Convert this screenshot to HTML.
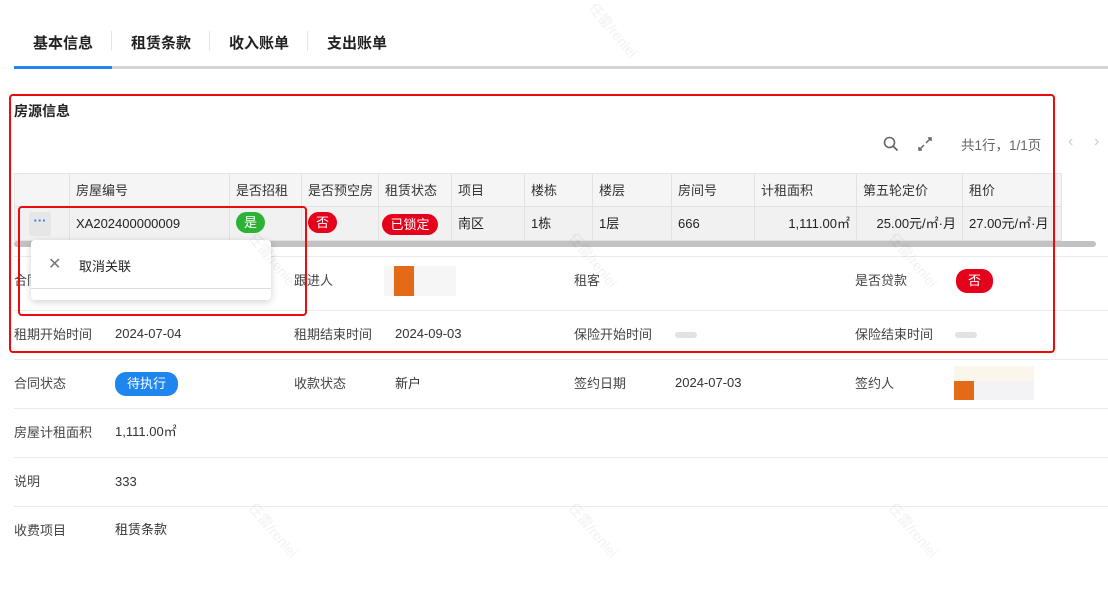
<!DOCTYPE html>
<html><head><meta charset="utf-8"><style>
*{margin:0;padding:0;box-sizing:border-box}
body{width:1108px;height:601px;background:#fff;font-family:"Liberation Sans","Noto Sans CJK SC",sans-serif;font-size:13px;color:#333;position:relative;overflow:hidden}
.a{position:absolute;white-space:nowrap}
.tab{font-size:15px;font-weight:bold;color:#222;top:32px}
.sep{position:absolute;top:31px;width:1px;height:20px;background:#e6e6e6}
.th,.td{position:absolute;height:34px;line-height:34px;padding-left:6px;border-right:1px solid #e2e2e2;font-size:13px}
.th{top:173px;background:#f5f5f5;color:#333;border-top:1px solid #e6e6e6;border-bottom:1px solid #e2e2e2}
.td{top:207px;background:#f1f1f1;color:#222;border-bottom:1px solid #e2e2e2}
.b{position:absolute;color:#fff;border-radius:11px;text-align:center;font-size:13px;line-height:21px;height:21px}
.hl{position:absolute;left:14px;width:1094px;height:1px;background:#ebebeb}
.lb{position:absolute;color:#444;font-size:13px;line-height:18px;white-space:nowrap}
.v{position:absolute;color:#333;font-size:13px;line-height:18px;white-space:nowrap}
.wm{position:absolute;color:rgba(0,0,0,0.06);font-size:14px;transform:rotate(50deg)}
</style></head><body>
<div class="a tab" style="left:33px">基本信息</div>
<div class="sep" style="left:111px"></div>
<div class="a tab" style="left:131px">租赁条款</div>
<div class="sep" style="left:209px"></div>
<div class="a tab" style="left:229px">收入账单</div>
<div class="sep" style="left:307px"></div>
<div class="a tab" style="left:327px">支出账单</div>
<div class="a" style="left:14px;top:66px;width:1094px;height:3px;background:#d4d4d4"></div>
<div class="a" style="left:14px;top:66px;width:98px;height:3px;background:#1f86f0"></div>

<div class="a" style="left:14px;top:101px;font-size:14px;font-weight:bold;color:#222">房源信息</div>
<svg class="a" style="left:882px;top:135px" width="18" height="18" viewBox="0 0 18 18"><circle cx="7.5" cy="7.5" r="5" fill="none" stroke="#666" stroke-width="1.6"/><path d="M11 11l4.5 4.5" stroke="#666" stroke-width="1.8"/></svg>
<svg class="a" style="left:916px;top:135px" width="18" height="18" viewBox="0 0 18 18"><path d="M10 8l5-5M12 3h3v3M8 10l-5 5M3 12v3h3" stroke="#666" stroke-width="1.5" fill="none"/></svg>
<div class="a" style="left:961px;top:134px;color:#666;font-size:13.5px">共1行，1/1页</div>
<div class="a" style="left:1068px;top:133px;color:#ccc;font-size:16px">‹</div>
<div class="a" style="left:1094px;top:133px;color:#ccc;font-size:16px">›</div>

<div class="th" style="left:14px;width:56px;border-left:1px solid #e6e6e6"></div>
<div class="th" style="left:70px;width:160px">房屋编号</div>
<div class="th" style="left:230px;width:72px">是否招租</div>
<div class="th" style="left:302px;width:77px">是否预空房</div>
<div class="th" style="left:379px;width:73px">租赁状态</div>
<div class="th" style="left:452px;width:73px">项目</div>
<div class="th" style="left:525px;width:68px">楼栋</div>
<div class="th" style="left:593px;width:79px">楼层</div>
<div class="th" style="left:672px;width:83px">房间号</div>
<div class="th" style="left:755px;width:102px">计租面积</div>
<div class="th" style="left:857px;width:106px">第五轮定价</div>
<div class="th" style="left:963px;width:99px">租价</div>

<div class="td" style="left:14px;width:56px;border-left:1px solid #e6e6e6"></div>
<div class="a" style="left:29px;top:212px;width:22px;height:24px;background:#e6e6e6;border-radius:3px;color:#1f86f0;text-align:center;line-height:18px;font-weight:bold">···</div>
<div class="td" style="left:70px;width:160px">XA202400000009</div>
<div class="td" style="left:230px;width:72px"></div>
<div class="td" style="left:302px;width:77px"></div>
<div class="td" style="left:379px;width:73px"></div>
<div class="td" style="left:452px;width:73px">南区</div>
<div class="td" style="left:525px;width:68px">1栋</div>
<div class="td" style="left:593px;width:79px">1层</div>
<div class="td" style="left:672px;width:83px">666</div>
<div class="td" style="left:755px;width:102px;text-align:right;padding-right:6px">1,111.00㎡</div>
<div class="td" style="left:857px;width:106px;text-align:right;padding-right:6px">25.00元/㎡·月</div>
<div class="td" style="left:963px;width:99px;overflow:hidden">27.00元/㎡·月</div>
<div class="b" style="left:236px;top:212px;width:29px;background:#2db236">是</div>
<div class="b" style="left:308px;top:212px;width:29px;background:#e5001b">否</div>
<div class="b" style="left:382px;top:214px;width:56px;background:#e5001b">已锁定</div>
<div class="a" style="left:14px;top:241px;width:1082px;height:6px;background:#c2c2c2;border-radius:3px"></div>

<div class="hl" style="top:256px"></div>
<div class="hl" style="top:310px"></div>
<div class="hl" style="top:359px"></div>
<div class="hl" style="top:408px"></div>
<div class="hl" style="top:457px"></div>
<div class="hl" style="top:506px"></div>

<div class="lb" style="left:14px;top:272px">合同</div>
<div class="lb" style="left:294px;top:272px">跟进人</div>
<div class="a" style="left:384px;top:266px;width:72px;height:30px;background:#f6f6f6"></div>
<div class="a" style="left:394px;top:266px;width:20px;height:30px;background:#e46a18"></div>
<div class="lb" style="left:574px;top:272px">租客</div>
<div class="lb" style="left:855px;top:272px">是否贷款</div>
<div class="b" style="left:956px;top:269px;width:37px;height:24px;line-height:24px;background:#e5001b">否</div>

<div class="lb" style="left:14px;top:326px">租期开始时间</div>
<div class="v" style="left:115px;top:325px">2024-07-04</div>
<div class="lb" style="left:294px;top:326px">租期结束时间</div>
<div class="v" style="left:395px;top:325px">2024-09-03</div>
<div class="lb" style="left:574px;top:326px">保险开始时间</div>
<div class="a" style="left:675px;top:332px;width:22px;height:6px;background:#e2e2e2;border-radius:3px"></div>
<div class="lb" style="left:855px;top:326px">保险结束时间</div>
<div class="a" style="left:955px;top:332px;width:22px;height:6px;background:#e2e2e2;border-radius:3px"></div>

<div class="lb" style="left:14px;top:375px">合同状态</div>
<div class="b" style="left:115px;top:372px;width:63px;height:24px;line-height:24px;background:#1f86f0">待执行</div>
<div class="lb" style="left:294px;top:375px">收款状态</div>
<div class="v" style="left:395px;top:375px">新户</div>
<div class="lb" style="left:574px;top:375px">签约日期</div>
<div class="v" style="left:675px;top:374px">2024-07-03</div>
<div class="lb" style="left:855px;top:375px">签约人</div>
<div class="a" style="left:954px;top:366px;width:80px;height:16px;background:#fbf6ec"></div>
<div class="a" style="left:954px;top:381px;width:80px;height:19px;background:#f3f3f5"></div>
<div class="a" style="left:954px;top:381px;width:20px;height:19px;background:#e46a18"></div>

<div class="lb" style="left:14px;top:424px">房屋计租面积</div>
<div class="v" style="left:115px;top:423px">1,111.00㎡</div>
<div class="lb" style="left:14px;top:473px">说明</div>
<div class="v" style="left:115px;top:473px">333</div>
<div class="lb" style="left:14px;top:522px">收费项目</div>
<div class="v" style="left:115px;top:521px">租赁条款</div>

<div class="a" style="left:31px;top:240px;width:240px;height:60px;background:#fff;border-radius:4px;box-shadow:0 2px 8px rgba(0,0,0,0.18)"></div>
<div class="a" style="left:48px;top:254px;color:#777;font-size:16px">✕</div>
<div class="a" style="left:79px;top:256px;color:#222">取消关联</div>
<div class="a" style="left:31px;top:288px;width:240px;height:1px;background:#ddd"></div>

<div class="a" style="left:9px;top:94px;width:1046px;height:259px;border:2px solid #ee0a0a;border-radius:4px"></div>
<div class="a" style="left:18px;top:206px;width:289px;height:110px;border:2px solid #ee0a0a;border-radius:4px"></div>

<div class="wm" style="left:580px;top:20px">任雷/renlei</div>
<div class="wm" style="left:240px;top:250px">任雷/renlei</div>
<div class="wm" style="left:560px;top:250px">任雷/renlei</div>
<div class="wm" style="left:880px;top:250px">任雷/renlei</div>
<div class="wm" style="left:240px;top:520px">任雷/renlei</div>
<div class="wm" style="left:560px;top:520px">任雷/renlei</div>
<div class="wm" style="left:880px;top:520px">任雷/renlei</div>
</body></html>
